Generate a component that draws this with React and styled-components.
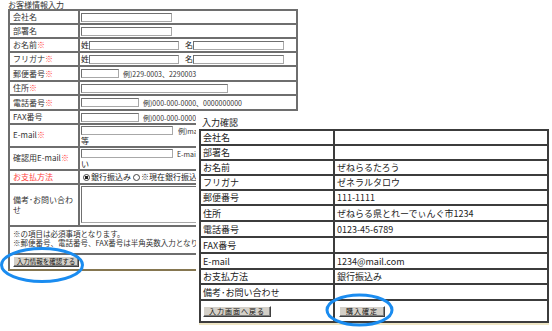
import React from "react";
import styled, { createGlobalStyle } from "styled-components";

const GlobalStyle = createGlobalStyle`
  html, body {
    margin: 0;
    padding: 0;
    background: #fff;
  }
  body {
    font-family: "Noto Sans CJK JP", "Liberation Sans", sans-serif;
    color: #222;
  }
`;

const Page = styled.div`
  position: relative;
  width: 552px;
  height: 331px;
  overflow: hidden;
`;

/* ---------- entry form (behind) ---------- */

const EntryForm = styled.section`
  padding-left: 8px;
`;

const Caption = styled.div`
  font-size: 8px;
  line-height: 9px;
  height: 9px;
  color: #333;
  white-space: nowrap;
`;

const FormTable = styled.table`
  width: 290px;
  border-collapse: collapse;
  table-layout: fixed;
  font-size: 8px;

  td {
    border: 2px solid #6e6e6e;
    padding: 0 1px;
    vertical-align: middle;
    white-space: nowrap;
    overflow: hidden;
    line-height: 10px;
  }

  td:first-child {
    padding-left: 3px;
  }
`;

const FormRow = styled.tr`
  height: ${(p) => p.$h}px;

  &:last-child td {
    border-bottom-color: #857650;
  }
`;

const Label = styled.td`
  width: 64px;
  color: ${(p) => (p.$red ? "#ff4040" : "#333")};
  white-space: normal !important;
`;

const Req = styled.span`
  color: #ff4040;
`;

const Field = styled.input`
  box-sizing: border-box;
  width: ${(p) => p.$w}px;
  height: 9px;
  padding: 0;
  margin: 0 ${(p) => p.$mr || 0}px 0 0;
  border: 1px solid #a8a8a8;
  border-top-color: #707070;
  border-left-color: #707070;
  background: #fff;
  vertical-align: middle;
  font-size: 7px;
`;

const Hint = styled.span`
  font-size: 7px;
  color: #333;
  vertical-align: middle;
`;

const Radio = styled.input.attrs({ type: "radio" })`
  appearance: none;
  box-sizing: border-box;
  width: 7px;
  height: 7px;
  margin: 0 1px 0 2px;
  border: 1px solid #444;
  border-radius: 50%;
  vertical-align: middle;

  &:checked {
    background: radial-gradient(circle, #222 0 1.6px, #fff 2px);
  }
`;

const Memo = styled.textarea`
  box-sizing: border-box;
  display: block;
  width: 200px;
  height: 37px;
  margin: 0;
  border: 1px solid #a8a8a8;
  border-top-color: #707070;
  border-left-color: #707070;
  resize: none;
`;

const NotesCell = styled.td`
  vertical-align: top !important;
  padding-top: 2px !important;
`;

const Notes = styled.div`
  font-size: 7.5px;
  line-height: 9px;
  color: #333;
`;

const OldButton = styled.button`
  box-sizing: border-box;
  width: ${(p) => p.$w}px;
  height: 11px;
  padding: 0;
  margin: 0 0 0 ${(p) => p.$ml || 0}px;
  background: #d4d0c8;
  border: 1px solid;
  border-color: #fff #404040 #404040 #fff;
  box-shadow: inset -1px -1px 0 #808080;
  font-family: inherit;
  font-size: ${(p) => p.$fs}px;
  letter-spacing: ${(p) => p.$ls || 0}px;
  line-height: 9px;
  color: #111;
  vertical-align: middle;
`;

/* ---------- confirm panel (overlay) ---------- */

const ConfirmPanel = styled.section`
  position: absolute;
  left: 196px;
  top: 111px;
  right: 0;
  bottom: 0;
  background: #fff;
  padding: 4px 0 0 3px;
`;

const PanelTitle = styled.div`
  font-size: 9px;
  line-height: 15px;
  height: 14px;
  padding-left: 3px;
  color: #222;
`;

const ConfirmTable = styled.table`
  width: 350px;
  border-collapse: collapse;
  table-layout: fixed;
  font-size: 9px;
  box-shadow: 0 2px 0 #efe6c4;

  td {
    border: 2px solid #3c3c3c;
    padding: 0 2px;
    vertical-align: middle;
    white-space: nowrap;
    line-height: 11px;
  }
`;

const ConfirmRow = styled.tr`
  height: ${(p) => p.$h}px;
`;

const ConfirmLabel = styled.td`
  width: 128px;
`;

const Circles = styled.svg`
  position: absolute;
  left: 0;
  top: 0;
  pointer-events: none;
`;

const confirmRows = [
  ["会社名", ""],
  ["部署名", ""],
  ["お名前", "ぜねらるたろう"],
  ["フリガナ", "ゼネラルタロウ"],
  ["郵便番号", "111-1111"],
  ["住所", "ぜねらる県とれーでぃんぐ市1234"],
  ["電話番号", "0123-45-6789"],
  ["FAX番号", ""],
  ["E-mail", "1234@mail.com"],
  ["お支払方法", "銀行振込み"],
  ["備考･お問い合わせ", ""],
];
const confirmHeights = [15, 15, 15, 15, 15, 16, 16, 16, 16, 15, 16];

export default function App() {
  return (
    <Page>
      <GlobalStyle />
      <EntryForm>
        <Caption>お客様情報入力</Caption>
        <FormTable>
          <tbody>
            <FormRow $h={14}>
              <Label>会社名</Label>
              <td><Field $w={91} /></td>
            </FormRow>
            <FormRow $h={14}>
              <Label>部署名</Label>
              <td><Field $w={91} /></td>
            </FormRow>
            <FormRow $h={14}>
              <Label>お名前<Req>※</Req></Label>
              <td>姓<Field $w={90} $mr={6} />名<Field $w={91} /></td>
            </FormRow>
            <FormRow $h={14}>
              <Label>フリガナ<Req>※</Req></Label>
              <td>姓<Field $w={90} $mr={6} />名<Field $w={91} /></td>
            </FormRow>
            <FormRow $h={15}>
              <Label>郵便番号<Req>※</Req></Label>
              <td><Field $w={38} $mr={4} /><Hint>例)229-0003、2290003</Hint></td>
            </FormRow>
            <FormRow $h={14}>
              <Label>住所<Req>※</Req></Label>
              <td><Field $w={147} /></td>
            </FormRow>
            <FormRow $h={15}>
              <Label>電話番号<Req>※</Req></Label>
              <td><Field $w={58} $mr={4} /><Hint>例)000-000-0000、0000000000</Hint></td>
            </FormRow>
            <FormRow $h={14}>
              <Label>FAX番号</Label>
              <td><Field $w={58} $mr={4} /><Hint>例)000-000-0000、0000000000</Hint></td>
            </FormRow>
            <FormRow $h={21}>
              <Label>E-mail<Req>※</Req></Label>
              <td><Field $w={92} $mr={5} /><Hint>例)mail@example.com</Hint><br />等</td>
            </FormRow>
            <FormRow $h={22}>
              <Label>確認用E-mail<Req>※</Req></Label>
              <td><Field $w={92} $mr={4} /><Hint>E-mailアドレスを再度入力してくださ</Hint><br />い</td>
            </FormRow>
            <FormRow $h={14}>
              <Label $red>お支払方法</Label>
              <td>
                <Radio name="pay" defaultChecked />銀行振込み
                <Radio name="pay" />※現在銀行振込のみ
              </td>
            </FormRow>
            <FormRow $h={42}>
              <Label>備考･お問い合わせ</Label>
              <td><Memo /></td>
            </FormRow>
            <FormRow $h={28}>
              <NotesCell colSpan={2}>
                <Notes>
                  ※の項目は必須事項となります。
                  <br />
                  ※郵便番号、電話番号、FAX番号は半角英数入力となります。
                </Notes>
              </NotesCell>
            </FormRow>
            <FormRow $h={16}>
              <td colSpan={2}>
                <OldButton $w={66} $fs={6.5}>入力情報を確認する</OldButton>
              </td>
            </FormRow>
          </tbody>
        </FormTable>
      </EntryForm>

      <ConfirmPanel>
        <PanelTitle>入力確認</PanelTitle>
        <ConfirmTable>
          <tbody>
            {confirmRows.map(([label, value], i) => (
              <ConfirmRow key={label} $h={confirmHeights[i]}>
                <ConfirmLabel>{label}</ConfirmLabel>
                <td>{value}</td>
              </ConfirmRow>
            ))}
            <ConfirmRow $h={22}>
              <ConfirmLabel>
                <OldButton $w={68} $fs={7} $ls={1}>入力画面へ戻る</OldButton>
              </ConfirmLabel>
              <td>
                <OldButton $w={46} $fs={7} $ls={1} $ml={2}>購入確定</OldButton>
              </td>
            </ConfirmRow>
          </tbody>
        </ConfirmTable>
      </ConfirmPanel>

      <Circles width="552" height="331" viewBox="0 0 552 331">
        <ellipse cx="42" cy="265" rx="40.5" ry="16.5" fill="none" stroke="#1a8cf0" strokeWidth="3" />
        <ellipse cx="359.5" cy="310" rx="32.5" ry="15" fill="none" stroke="#1a8cf0" strokeWidth="3" />
      </Circles>
    </Page>
  );
}
